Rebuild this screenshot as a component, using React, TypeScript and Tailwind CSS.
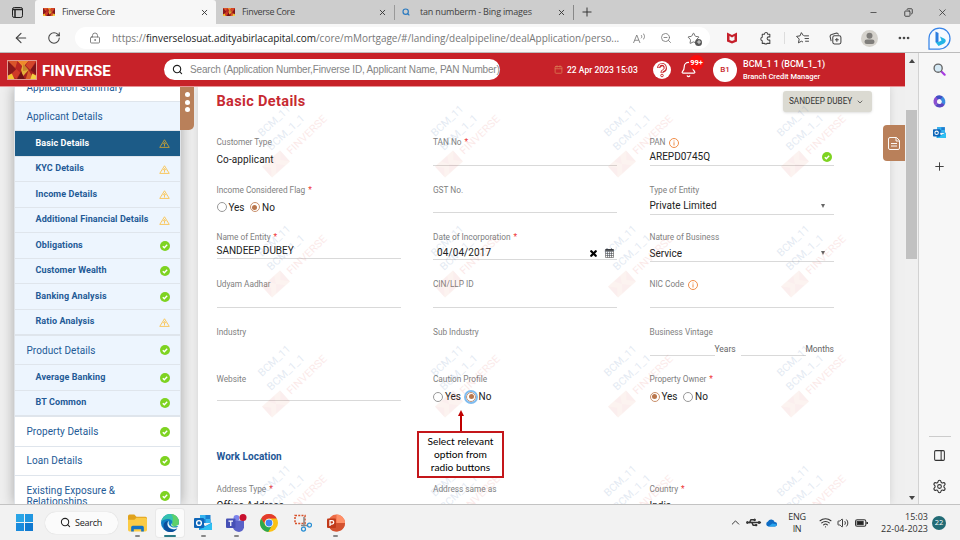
import React from "react";
import {
  ArrowLeft, RotateCw, LockKeyhole, Search, X, Plus, Minus, Copy, ZoomOut, Star, Ellipsis,
  ChevronDown, ChevronUp, Calendar, Bell, Settings, PanelRight, Wifi, Volume2, Usb, AppWindow,
} from "lucide-react";

function Logo({ className = "" }: { className?: string }) {
  return (
    <svg viewBox="0 0 30 20" preserveAspectRatio="none" className={className}>
      <rect width="30" height="20" fill="#a8201f" />
      <path d="M0 0l9 10L0 18z" fill="#8a181b" />
      <path d="M0 0h11l-3 8z" fill="#d9542a" />
      <path d="M10 0h12l-6 7z" fill="#f08a2c" />
      <path d="M10 0l6 7-4 7-4-6z" fill="#b92522" />
      <path d="M30 0h-8l-3 5 5 5z" fill="#d4462a" />
      <path d="M16 3l6 7-6 7-2-7z" fill="#e3b13a" />
      <path d="M16 3l6 7-6 1z" fill="#c8842c" />
      <path d="M30 2v13l-6-5z" fill="#7c1519" />
      <path d="M9 9l4 4-4 7-6-5z" fill="#cf3a27" />
      <path d="M22 10l6 10h-9z" fill="#d9602a" />
      <path d="M0 20v-4l4-2 3 6z" fill="#f2c430" />
      <path d="M30 20v-4l-4-2-2 6z" fill="#f2d040" />
      <path d="M10 20l4-8 4 8z" fill="#6e1216" />
    </svg>
  );
}

const Check = ({ className = "" }: { className?: string }) => (
  <svg viewBox="0 0 20 20" className={`size-[10px] shrink-0 ${className}`}>
    <circle cx="10" cy="10" r="10" fill="#7ed321" />
    <path d="M5.6 10.3l3 3 5.8-6" fill="none" stroke="#fff" strokeWidth="2.8" />
  </svg>
);
const Warn = ({ dim }: { dim?: boolean }) => (
  <svg viewBox="0 0 22 18" className="h-[9px] w-[11px] shrink-0" fill="none" stroke={dim ? "#b89a3c" : "#f9c860"} strokeWidth="2">
    <path d="M11 1.5L20.5 16.8H1.5z" strokeLinejoin="round" />
    <path d="M11 15V9M8.3 10.5L11 6.8l2.7 3.7" />
  </svg>
);
const Info = () => (
  <svg viewBox="0 0 20 20" className="ml-[4px] size-[10px]" fill="none" stroke="#ef8d48" strokeWidth="2">
    <circle cx="10" cy="10" r="9" />
    <path d="M10 8.5v6.500M10 5v2" />
  </svg>
);

function Tab({ title, active, bing }: { title: string; active?: boolean; bing?: boolean }) {
  return (
    <div className={`flex h-full items-center ${bing ? "w-[178px] pl-[7px]" : active ? "w-[181px] rounded-t-[3px] bg-[#f7f7f7] pl-[8px]" : "w-[178px] pl-[7px]"}`}>
      {bing ? <Search className="size-[8px] text-[#2a7ac0]" strokeWidth={3.5} /> : <Logo className="h-[8px] w-[12px]" />}
      <span className={`flex-1 text-[9px] text-[#404040] ${bing ? "ml-[10px] tracking-[-0.18px]" : "ml-[7px] tracking-[-0.35px]"}`}>{title}</span>
      <X className={`size-[9px] text-[#333] ${bing ? "mr-[7px]" : "mr-[7px]"}`} strokeWidth={2.4} />
    </div>
  );
}

function Browser() {
  return (
    <div className="font-['Open_Sans',sans-serif]">
      <div className="flex h-[24px] items-center bg-[#cdcdcd] text-[#333]">
        <div className="flex w-[35px] justify-center">
          <svg viewBox="0 0 22 22" className="size-[11px]" fill="none" stroke="#222" strokeWidth="2">
            <rect x="1" y="1" width="20" height="20" rx="3.5" />
            <path d="M1 5h20M6 6v15" strokeWidth="3" />
          </svg>
        </div>
        <Tab title="Finverse Core" active />
        <Tab title="Finverse Core" />
        <div className="h-[15px] w-px bg-[#999]" />
        <Tab title="tan numberm - Bing images" bing />
        <div className="h-[15px] w-px bg-[#888]" />
        <Plus className="ml-[6px] size-[14px]" strokeWidth={1.7} />
        <div className="ml-auto flex items-center pr-[12px]">
          <Minus className="size-[9px]" strokeWidth={2} />
          <Copy className="ml-[26px] size-[9px] -scale-x-100" strokeWidth={2.3} />
          <X className="ml-[24px] size-[11px]" strokeWidth={1.7} />
        </div>
      </div>
      <div className="flex h-[29px] items-center border-b border-[#bcbcbc] bg-[#f7f7f7] text-[#444]">
        <ArrowLeft className="ml-[13px] size-[16px]" strokeWidth={1.7} />
        <RotateCw className="ml-[18px] size-[14px]" strokeWidth={1.8} />
        <div className="ml-[14px] flex h-[22px] w-[635px] shrink-0 items-center rounded-full bg-white">
          <LockKeyhole className="ml-[14px] size-[12px] shrink-0 text-[#777]" strokeWidth={1.8} />
          <div className="ml-[11px] w-[508px] shrink-0 whitespace-nowrap text-[10px] tracking-[-0.02px] text-[#777]">
            https://<span className="text-[#222]">finverselosuat.adityabirlacapital.com</span>/core/mMortgage/#/landing/dealpipeline/dealApplication/perso...
          </div>
          <svg viewBox="0 0 26 22" className="ml-[13px] h-[11px] w-[13px]" fill="none" stroke="#777" strokeWidth="1.700">
            <path d="M1 20L7.500 4 14 20M3.500 14.500h8M16 4c2 1.500 2 5 0 6.500M20 1c4 3 4 9 0 12" />
          </svg>
          <ZoomOut className="ml-[14px] size-[12px] text-[#777]" strokeWidth={1.7} />
          <div className="relative ml-[15px]">
            <Star className="size-[13px] text-[#666]" strokeWidth={1.7} />
            <span className="absolute bottom-[-1px] right-[-2px] flex size-[7px] items-center justify-center rounded-full bg-[#555]">
              <Plus className="size-[6px] text-white" strokeWidth={3} />
            </span>
          </div>
        </div>
        <svg viewBox="0 0 20 22" className="ml-[17px] h-[12px] w-[10px]">
          <path d="M0 0l10 5L20 0v18l-10 4L0 18z" fill="#c6202b" />
          <path d="M5 7l5 3 5-3v8l-5 2-5-2z" fill="#f7f7f7" />
        </svg>
        <svg viewBox="0 0 24 24" className="ml-[22px] size-[13px]" fill="none" stroke="#444" strokeWidth="1.900" strokeLinejoin="round">
          <path d="M6 4h4a3 3 0 0 1 6 0h4v5h-2a3 3 0 0 0 0 6h2v6h-5a3 3 0 0 1-5 0H6v-5a3.300 3.300 0 0 1 0-6.500z" />
        </svg>
        <div className="ml-[12px] h-[12px] w-px bg-[#ddd]" />
        <svg viewBox="0 0 26 22" className="ml-[11px] h-[12px] w-[14px]" fill="none" stroke="#444" strokeWidth="1.8">
          <path d="M14 7L10 1 7.5 7 1 8l5 5-1.5 7L10 17l3 1.5M15 7h9M16 12h8M17 17h7" />
        </svg>
        <svg viewBox="0 0 24 24" className="ml-[19px] size-[13px]" fill="none" stroke="#444" strokeWidth="1.9">
          <rect x="7" y="7" width="15" height="15" rx="3" />
          <path d="M14.5 11v7M11 14.5h7M4 17L2 8c0-2 1-3 3-3.500L14 2c2 0 3 1 3.500 3" />
        </svg>
        <svg viewBox="0 0 34 34" className="ml-[19px] size-[17px]">
          <circle cx="17" cy="17" r="17" fill="#d5d2cc" />
          <circle cx="17" cy="11.500" r="6" fill="#7f7d7a" />
          <rect x="7" y="19" width="20" height="9" rx="4.500" fill="#7f7d7a" />
        </svg>
        <Ellipsis className="ml-[19px] size-[14px]" strokeWidth={2.6} />
        <svg viewBox="0 0 46 46" className="ml-[17px] size-[23px]">
          <path d="M2 44V23a21 21 0 1 1 21 21z" fill="#f5faff" stroke="#3784e8" strokeWidth="2.500" />
          <path d="M15 9l6 3v23l-6-5z" fill="#2b7de0" />
          <path d="M21 30l6-3-3-8 10 5c3 3 1 7-2 9l-11 5-6-8z" fill="#23b5e6" />
        </svg>
      </div>
    </div>
  );
}

function Header() {
  return (
    <div className="flex h-[34px] items-center border-b border-[#e89497] bg-[#c72229] text-white">
      <Logo className="ml-[7px] mt-[1px] h-[20px] w-[30px] shrink-0 border border-[#e39a90]" />
      <span className="ml-[5px] mt-[3px] w-[122px] shrink-0 text-[15px] font-bold tracking-[0px]">FINVERSE</span>
      <div className="flex h-[21px] w-[336px] shrink-0 items-center overflow-hidden rounded-full bg-white pl-[8px]">
        <Search className="size-[11px] shrink-0 text-[#222]" strokeWidth={2.5} />
        <span className="ml-[7px] whitespace-nowrap font-['Liberation_Sans',sans-serif] text-[10px] tracking-[-0.17px] text-[#858585]">
          Search (Application Number,Finverse ID, Applicant Name, PAN Number)
        </span>
      </div>
      <Calendar className="ml-[54px] size-[9px] text-[#d97a52]" strokeWidth={2.2} />
      <span className="ml-[4px] mt-[1px] w-[72px] whitespace-nowrap text-[8.500px] font-medium tracking-[0.03px]">22 Apr 2023 15:03</span>
      <svg viewBox="0 0 36 36" className="ml-[14px] size-[18px]" fill="none">
        <circle cx="18" cy="18" r="18" fill="#fff" />
        <path d="M11.500 14a6.500 6.500 0 1 1 9 6q-2.500 1-2.500 3.500" stroke="#c72229" strokeWidth="6.500" />
        <path d="M11.500 13a6.500 6.500 0 1 1 9 6q-2.500 1-2.500 3.500" stroke="#fff" strokeWidth="2.200" />
        <circle cx="18" cy="29" r="2.600" stroke="#c72229" strokeWidth="1.800" />
      </svg>
      <div className="relative ml-[9px]">
        <Bell className="size-[17px]" strokeWidth={1.7} />
        <span className="absolute right-[-7px] top-[-6px] flex size-[15px] items-center justify-center rounded-full bg-[#fb0d0d] text-[7.500px] font-bold">99+</span>
      </div>
      <div className="ml-[16px] flex size-[24px] items-center justify-center rounded-full bg-white text-[8px] font-medium text-[#c72229]">B1</div>
      <div className="ml-[6px] mt-[2px] leading-[11.500px]">
        <div className="whitespace-nowrap text-[9px] font-medium tracking-[0px]">BCM_1 1 (BCM_1_1)</div>
        <div className="whitespace-nowrap text-[7.500px] font-medium">Branch Credit Manager</div>
      </div>
    </div>
  );
}

type Row = { t: string; kind: "top" | "sub"; icon?: "w" | "c"; sel?: boolean; white?: boolean; thick?: boolean };
const rows: Row[] = [
  { t: "Application Summary", kind: "top", white: true },
  { t: "Applicant Details", kind: "top" },
  { t: "Basic Details", kind: "sub", icon: "w", sel: true },
  { t: "KYC Details", kind: "sub", icon: "w" },
  { t: "Income Details", kind: "sub", icon: "w" },
  { t: "Additional Financial Details", kind: "sub", icon: "w" },
  { t: "Obligations", kind: "sub", icon: "c" },
  { t: "Customer Wealth", kind: "sub", icon: "c" },
  { t: "Banking Analysis", kind: "sub", icon: "c" },
  { t: "Ratio Analysis", kind: "sub", icon: "w" },
  { t: "Product Details", kind: "top", icon: "c", thick: true },
  { t: "Average Banking", kind: "sub", icon: "c" },
  { t: "BT Common", kind: "sub", icon: "c" },
  { t: "Property Details", kind: "top", icon: "c", white: true, thick: true },
  { t: "Loan Details", kind: "top", icon: "c", white: true },
];

function Sidebar() {
  return (
    <div className="ml-[14px] w-[167px] overflow-hidden border-x border-[#dfe3e8] bg-white shadow-[0_0_12px_rgba(0,0,0,0.3)]">
      <div className="-mt-[13.500px] text-[#235a96]">
        {rows.map((r) => (
          <div
            key={r.t}
            className={`flex items-center justify-between border-b border-[#dfe5ec] pr-[10.500px] ${
              r.kind === "top" ? "pl-[11.500px] text-[10px] tracking-[0.06px]" : "h-[25.500px] pl-[20.500px] text-[9px] font-bold tracking-[0.1px]"
            } ${r.kind === "top" ? (r.thick ? "h-[30.200px] border-t" : "h-[28.900px]") : ""} ${r.sel ? "bg-[#1c5b87] text-white" : r.white ? "bg-white" : "bg-[#edf5fe]"}`}
          >
            <span className="whitespace-nowrap">{r.t}</span>
            {r.icon === "w" ? <Warn dim={r.sel} /> : r.icon === "c" ? <Check /> : null}
          </div>
        ))}
        <div className="flex items-center justify-between pl-[11.500px] pr-[10.500px] pt-[9px] text-[10px] leading-[11.500px] tracking-[0.06px]">
          <span>Existing Exposure &amp;<br />Relationships</span>
          <Check />
        </div>
      </div>
    </div>
  );
}

function Field({ label, req, info, children, w = "" }: { label: string; req?: boolean; info?: boolean; children?: React.ReactNode; w?: string }) {
  return (
    <div className={`h-[47.400px] ${w}`}>
      <div className="flex h-[12px] items-center whitespace-nowrap text-[8.300px] tracking-[-0.03px] text-[#7f7f7f]">
        {label}
        {req && <span className="ml-[3px] text-[#e33]">*</span>}
        {info && <Info />}
      </div>
      {children}
    </div>
  );
}
const Line = ({ children, h = "h-[17px]" }: { children?: React.ReactNode; h?: string }) => (
  <div className={`flex w-[184px] items-center whitespace-nowrap border-b border-[#d9d9d9] text-[10px] text-[#222] ${h}`}>{children}</div>
);
const Caret = () => <span className="ml-auto mr-[9px] mt-[2px] border-x-[2.500px] border-t-[4px] border-x-transparent border-t-[#666]" />;

const Dot = ({ on, focus }: { on?: boolean; focus?: boolean }) => (
  <span className={`flex size-[10px] items-center justify-center rounded-full border bg-white ${on ? "border-[#c9906b]" : "border-[#999]"} ${focus ? "outline-2 outline-[#7fbcf0]" : ""}`}>
    {on && <span className="size-[5px] rounded-full bg-[#b9764c]" />}
  </span>
);
function Radios({ yes, focus }: { yes?: boolean; focus?: boolean }) {
  return (
    <div className="flex h-[23px] items-center text-[10px] text-[#222]">
      <Dot on={yes} />
      <span className="ml-[2px] w-[16px] tracking-[-0.1px]">Yes</span>
      <span className="ml-[5px]"><Dot on={!yes} focus={focus} /></span>
      <span className="ml-[2.500px]">No</span>
    </div>
  );
}

const marks = [0, 1, 2, 3].flatMap((r) => [0, 1, 2, 3].map((c) => ({ x: 58 + c * 173, y: 13 + r * 120 })));
function Watermarks() {
  return (
    <svg className="pointer-events-none absolute inset-0 h-full w-full" viewBox="0 0 692 417" fontFamily="Roboto, sans-serif">
      {marks.map((m) => (
        <g key={`${m.x}-${m.y}`} transform={`translate(${m.x} ${m.y})`}>
          <g fill="#2f5fa5" fontSize="10.500" opacity="0.13">
            <text transform="translate(6 37) rotate(-43)" textLength="40" lengthAdjust="spacingAndGlyphs">BCM_11</text>
            <text transform="translate(15 51) rotate(-43)" textLength="47" lengthAdjust="spacingAndGlyphs">BCM_1_1</text>
          </g>
          <text transform="translate(35 55) rotate(-44)" fontSize="10.500" textLength="51" lengthAdjust="spacingAndGlyphs" fill="#e0403a" opacity="0.11">FINVERSE</text>
          <g transform="translate(20 64) rotate(-42)" opacity="0.075">
            <rect x="-12" y="-7.500" width="24" height="15" fill="#e06a40" />
            <path d="M-12 -7.500l6 7-6 7zM-4 -7l4 7 4-7zM-6 7l6-7 6 7zM12 -7l-6 7 6 7z" fill="#d03028" />
          </g>
        </g>
      ))}
    </svg>
  );
}

function Card() {
  return (
    <div className="relative ml-[17px] w-[692px] overflow-hidden bg-white pl-[18.500px] shadow-[0_0_8px_rgba(0,0,0,0.12)]">
      <div className="flex h-[49.500px] items-start justify-between pr-[18px] pt-[4px]">
        <h1 className="mt-[2px] text-[14.500px] font-bold leading-[18px] tracking-[0.35px] text-[#c72a32]">Basic Details</h1>
        <button className="flex h-[21px] w-[89px] items-center justify-between rounded-[3px] bg-[#dbdad2] pl-[6px] pr-[8px] text-[8.200px] text-[#333] shadow-sm">
          <span className="whitespace-nowrap">SANDEEP DUBEY</span>
          <ChevronDown className="size-[8px]" strokeWidth={2} />
        </button>
      </div>
      <div className="grid w-[649.500px] grid-cols-3">
        <Field label="Customer Type"><div className="pt-[3px] text-[10px] leading-[15px] tracking-[0.1px] text-[#222]">Co-applicant</div></Field>
        <Field label="TAN No" req><Line /></Field>
        <Field label="PAN" info><Line><span>AREPD0745Q</span><Check className="ml-auto mr-[2px]" /></Line></Field>

        <Field label="Income Considered Flag" req><Radios /></Field>
        <Field label="GST No."><Line /></Field>
        <Field label="Type of Entity"><Line h="h-[19px]"><span className="mt-[2px] tracking-[0.03px]">Private Limited</span><Caret /></Line></Field>

        <Field label="Name of Entity" req><Line h="h-[16px]">SANDEEP DUBEY</Line></Field>
        <Field label="Date of Incorporation" req>
          <Line>
            <span className="ml-[4px] mt-[3px] tracking-[0.1px]">04/04/2017</span>
            <X className="ml-auto mr-[7px] mt-[4px] size-[9px] text-black" strokeWidth={6} />
            <svg viewBox="0 0 18 20" className="mr-[3px] mt-[4px] h-[10px] w-[9px]" fill="none" stroke="#444" strokeWidth="1.100">
              <path d="M1 3h16v16H1zM1 7h16M1 11h16M1 15h16M5 7v12M9 7v12M13 7v12M4 0v4M13 0v4" />
              <path d="M1 4h16" stroke="#222" strokeWidth="3" />
            </svg>
          </Line>
        </Field>
        <Field label="Nature of Business"><Line h="h-[19px]"><span className="mt-[2px]">Service</span><Caret /></Line></Field>

        <Field label="Udyam Aadhar"><Line /></Field>
        <Field label="CIN/LLP ID"><Line /></Field>
        <Field label="NIC Code" info><Line /></Field>

        <Field label="Industry" />
        <Field label="Sub Industry" />
        <Field label="Business Vintage">
          <div className="flex h-[18px] whitespace-nowrap text-[8.500px] text-[#666]">
            <div className="w-[65px] border-b border-[#d9d9d9]" />
            <span className="w-[26px] leading-[23px]">Years</span>
            <div className="w-[65px] border-b border-[#d9d9d9]" />
            <span className="leading-[23px] tracking-[-0.08px]">Months</span>
          </div>
        </Field>

        <Field label="Website"><Line h="h-[16px]" /></Field>
        <Field label="Caution Profile"><Radios focus /></Field>
        <Field label="Property Owner" req><Radios yes /></Field>
      </div>
      <h2 className="h-[62px] pt-[29px] text-[10px] font-bold leading-[14px] tracking-[0.05px] text-[#1e5796]">Work Location</h2>
      <div className="grid w-[649.500px] grid-cols-3 text-[10px] text-[#222]">
        <Field label="Address Type" req><div className="pt-[3px] tracking-[0.1px]">Office Address</div></Field>
        <Field label="Address same as" />
        <Field label="Country" req><div className="pt-[3px]">India</div></Field>
      </div>
      <Watermarks />
    </div>
  );
}

function EdgeBar() {
  return (
    <div className="flex w-[42px] flex-col items-center border-l border-[#d2d2d2] bg-[#f7f7f7] text-[#333]">
      <svg viewBox="0 0 24 24" className="mt-[10px] size-[13px]" fill="none">
        <path d="M15.500 15.500l6 6" stroke="#a73be0" strokeWidth="4" strokeLinecap="round" />
        <circle cx="9.500" cy="9.500" r="7.500" fill="#d4e9f5" stroke="#666" strokeWidth="2.500" />
      </svg>
      <svg viewBox="0 0 24 24" className="mt-[19px] size-[13px]" fill="none" strokeWidth="6.500">
        <path d="M6 17.500A8.500 8.500 0 0 1 8 5" stroke="#8a4fd0" />
        <path d="M7 5.500a8.500 8.500 0 0 1 10 .5" stroke="#3f4fc4" />
        <path d="M16 5.500a8.500 8.500 0 0 1 2.500 11" stroke="#3a8be0" />
        <path d="M19 16a8.500 8.500 0 0 1-13 1.500" stroke="#5a46c0" />
      </svg>
      <Outlook className="mt-[18px] size-[13px]" />
      <Plus className="mt-[21px] size-[13px]" strokeWidth={1.7} />
      <div className="mb-[12px] mt-auto h-px w-[22px] bg-[#ccc]" />
      <PanelRight className="size-[13px]" strokeWidth={1.9} />
      <Settings className="mb-[10px] mt-[17px] size-[15px]" strokeWidth={1.700} />
    </div>
  );
}

const Outlook = ({ className = "" }: { className?: string }) => (
  <svg viewBox="0 0 36 34" className={className}>
    <path d="M12 2h21v16H12z" fill="#1b7fd1" />
    <path d="M12 2h11v8H12zM23 10h10v8H23z" fill="#35b4f0" />
    <path d="M10 17l13 7 13-7v15H10z" fill="#1490df" />
    <path d="M10 32l26-14v14z" fill="#2ec0f2" />
    <rect y="8" width="20" height="20" rx="2" fill="#0f66b8" />
    <circle cx="10" cy="18" r="4.800" fill="none" stroke="#fff" strokeWidth="2.800" />
  </svg>
);

const Under = ({ active }: { active?: boolean }) => (
  <span className={`absolute h-[2px] rounded-full ${active ? "bottom-[-4px] w-[12px] bg-[#2a7a86]" : "bottom-[-4px] w-[5px] bg-[#888]"}`} />
);
const TaskApp = ({ children, w, active, plain }: { children: React.ReactNode; w: string; active?: boolean; plain?: boolean }) => (
  <div className={`relative flex h-[20px] items-center justify-center ${w}`}>
    {children}
    {!plain && <Under active={active} />}
  </div>
);

function Taskbar() {
  return (
    <div className="flex h-[36px] items-center border-t border-[#c3c3c3] bg-[#f2f2f2] font-['Open_Sans',sans-serif] text-[#222]">
      <div className="ml-[16px] grid size-[17px] grid-cols-2 gap-px">
        <i className="bg-[#2aa5e6]" /><i className="bg-[#2096e0]" /><i className="bg-[#1a8bdc]" /><i className="bg-[#0f79d0]" />
      </div>
      <div className="ml-[12px] flex h-[22px] w-[73px] items-center rounded-full bg-[#fbfbfb] pl-[15px] shadow-[0_0_1px_rgba(0,0,0,0.2)]">
        <Search className="size-[11px]" strokeWidth={2.300} />
        <span className="ml-[4px] text-[9px] tracking-[-0.25px]">Search</span>
      </div>
      <div className="ml-[3px] flex items-center">
        <TaskApp w="w-[33px]">
          <svg viewBox="0 0 36 34" className="h-[18px] w-[19px]">
            <path d="M0 4q0-3 3-3h9l4 4h17q3 0 3 3v6H0z" fill="#e0a21c" />
            <path d="M0 11h12l4-4h17q3 0 3 3v20q0 3-3 3H3q-3 0-3-3z" fill="#fbcb45" />
            <path d="M6 33v-8q0-3 3-3h18q3 0 3 3v8h-5v-4H11v4z" fill="#1473c4" />
          </svg>
        </TaskApp>
        <div className="ml-[2px] flex h-[28px] w-[28px] items-center justify-center rounded-[3px] bg-[#fbfbfb] ring-1 ring-[#e9e9e9]">
          <TaskApp w="w-[28px]" active>
            <svg viewBox="0 0 36 36" className="size-[18px]">
              <circle cx="18" cy="18" r="18" fill="#1180c6" />
              <path d="M1 15C3 5 10 0 18 0c10 0 18 7 18 16 0 6-4 9-9 9-4 0-6-1-6-3s2-2 2-5c0-4-4-7-9-7-6 0-11 2-13 5z" fill="#35c1b0" />
              <path d="M20 0c9 0 16 8 16 16 0 6-4 9-9 9-4 0-6-1-6-3s2-2 2-5c2-8 1-13-3-17z" fill="#5fd06a" />
              <path d="M14 14c-4 6 0 15 8 17 4 1 8 0 11-3-4 7-10 9-16 8C7 35 3 25 6 19c2-4 6-5 8-5z" fill="#0c4f9c" />
              <path d="M16 14c-3 7 3 14 13 13 3 0 6-3 7-2-2 3-4 4-7 5-8 2-16-3-16-10 0-3 1-5 3-6zM22 17c0 3-2 4-1 6 2 2 6 2 9 1l6 1v-4l-6 3c-4 1-8 0-8-2z" fill="#f7f7f7" />
            </svg>
          </TaskApp>
        </div>
        <TaskApp w="w-[38px]"><Outlook className="h-[17px] w-[18px]" /></TaskApp>
        <TaskApp w="w-[28px]">
          <svg viewBox="0 0 42 36" className="h-[18px] w-[21px]">
            <circle cx="21" cy="8" r="6" fill="#7b83eb" />
            <path d="M12 13h24v14q-2 8-10 9-9-1-12-8z" fill="#5a62c8" />
            <rect y="9" width="19" height="19" rx="2" fill="#4650b5" />
            <path d="M5 14h9M9.500 14v10" stroke="#fff" strokeWidth="2.500" />
            <circle cx="34" cy="7" r="7" fill="#c8102e" />
          </svg>
        </TaskApp>
        <TaskApp w="w-[38px]" plain>
          <svg viewBox="0 0 36 36" className="size-[18px]">
            <circle cx="18" cy="18" r="18" fill="#fbc116" />
            <path d="M2.400 9A18 18 0 0 1 33.600 9H18a9 9 0 0 0-8 13.500z" fill="#e33b2e" />
            <path d="M2.400 9a18 18 0 0 0 14 27l8-13.500a9 9 0 0 1-14 0z" fill="#2da94f" />
            <circle cx="18" cy="18" r="8.500" fill="#fff" />
            <circle cx="18" cy="18" r="6.800" fill="#4285f4" />
          </svg>
        </TaskApp>
        <TaskApp w="w-[30px]" plain>
          <svg viewBox="0 0 36 36" className="size-[18px]" fill="none">
            <path d="M2 3h20v16H2z" stroke="#d8502a" strokeWidth="3" strokeDasharray="4 2.500" />
            <path d="M20 6v19M14 23h14" stroke="#888" strokeWidth="3" />
            <circle cx="19" cy="30" r="4" stroke="#2a8fd4" strokeWidth="2.500" />
            <circle cx="31" cy="22" r="4" stroke="#2a8fd4" strokeWidth="2.500" />
          </svg>
        </TaskApp>
        <TaskApp w="w-[35px]">
          <svg viewBox="0 0 36 36" className="size-[18px]">
            <circle cx="19" cy="18" r="17" fill="#ed6c47" />
            <path d="M19 1a17 17 0 0 1 17 17H19z" fill="#ff9068" />
            <path d="M36 18a17 17 0 0 1-32 8l15-8z" fill="#d35230" />
            <rect y="9" width="18" height="19" rx="2" fill="#c13b1b" />
            <path d="M6 24V13h4a3 3 0 0 1 0 7H6" fill="none" stroke="#fff" strokeWidth="2.500" />
          </svg>
        </TaskApp>
      </div>
      <div className="ml-auto flex items-center text-[9px] leading-[11.500px] text-[#333]">
        <ChevronUp className="size-[13px]" strokeWidth={1.800} />
        <Usb className="ml-[5px] size-[13px] rotate-45" strokeWidth={2.800} />
        <svg viewBox="0 0 26 18" className="ml-[5px] h-[8px] w-[13px]">
          <path d="M6 17a6 6 0 0 1-1-11.500A8 8 0 0 1 20 7a5 5 0 0 1 1 10z" fill="#0f6cc4" />
          <path d="M6 17L15 10l9 2a4 4 0 0 1-3 5z" fill="#2aa4ee" />
        </svg>
        <div className="ml-[10px] w-[18px] text-center tracking-[-0.3px]">ENG<br />IN</div>
        <Wifi className="ml-[13px] size-[13px]" strokeWidth={2} />
        <Volume2 className="ml-[5px] size-[12px]" strokeWidth={1.900} />
        <svg viewBox="0 0 24 14" className="ml-[6px] h-[8px] w-[13px]" fill="none" stroke="#333" strokeWidth="2">
          <rect x="1" y="1" width="19" height="12" rx="3" />
          <rect x="4" y="4" width="11" height="6" fill="#222" />
          <path d="M22.500 5v4" strokeWidth="3" />
        </svg>
        <div className="ml-[11px] w-[49px] whitespace-nowrap text-right tracking-[0px]">15:03<br />22-04-2023</div>
        <div className="ml-[4px] mr-[14px] flex size-[14px] items-center justify-center rounded-full bg-[#226b75] text-[7.500px] text-white">22</div>
      </div>
    </div>
  );
}

export default function App() {
  return (
    <div className="relative flex h-[540px] w-[960px] flex-col overflow-hidden bg-[#f7f7f7] font-['Roboto',sans-serif]">
      <Browser />
      <div className="flex h-[451px]">
        <div className="flex w-[905px] flex-col">
          <Header />
          <div className="relative flex h-[417px] overflow-hidden bg-[#efefef]">
            <Sidebar />
            <Card />
            <div className="absolute left-[180px] top-0 flex h-[43px] w-[14px] flex-col items-center gap-[2.500px] rounded-br-[5px] bg-[#b9805a] pt-[5px]">
              <i className="size-[5px] rounded-full bg-white" />
              <i className="size-[5px] rounded-full bg-white" />
              <i className="size-[5px] rounded-full bg-white" />
            </div>
            <div className="absolute right-0 top-[38px] flex h-[36px] w-[22px] items-center justify-center rounded-l-[4px] bg-[#b9805a]">
              <svg viewBox="0 0 24 26" className="h-[13px] w-[12px]" fill="none" stroke="#fff" strokeWidth="1.900">
                <path d="M4 1h13l6 6v15q0 3-3 3H4q-3 0-3-3V4q0-3 3-3zM16 1v7h7M6 13h12M6 18h12" />
              </svg>
            </div>
            <div className="absolute left-[417px] top-[323px] flex w-[87px] flex-col items-center">
              <i className="border-x-[3px] border-b-[6px] border-x-transparent border-b-[#c00000]" />
              <i className="h-[15px] w-[2px] bg-[#c00000]" />
              <div className="h-[47px] w-full border-2 border-[#c4161a] bg-white pt-[2px] text-center font-['Lato',sans-serif] text-[10.200px] leading-[13px] text-black">
                Select relevant<br />option from<br />radio buttons
              </div>
            </div>
          </div>
        </div>
        <div className="flex w-[13px] flex-col items-center bg-[#f0f0f0]">
          <i className="mt-[6px] border-x-[3px] border-b-[4px] border-x-transparent border-b-[#444]" />
          <div className="mt-[47px] h-[149px] w-[11px] bg-[#c1c1c1]" />
          <i className="mb-[4px] mt-auto border-x-[3px] border-t-[4px] border-x-transparent border-t-[#444]" />
        </div>
        <EdgeBar />
      </div>
      <Taskbar />
    </div>
  );
}
